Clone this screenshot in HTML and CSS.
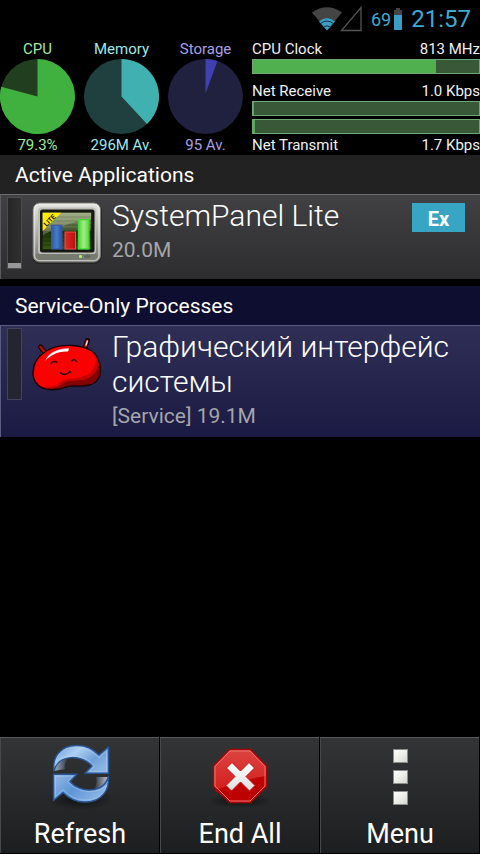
FILE: index.html
```html
<!DOCTYPE html>
<html lang="en">
<head>
<meta charset="utf-8">
<meta name="viewport" content="width=device-width, initial-scale=1">
<title>SystemPanel</title>
<link rel="stylesheet" href="styles.css">
</head>
<body>
<div class="screen">
  <header class="status-bar">
    <svg class="signals" width="50" height="26" viewBox="0 0 50 26" aria-hidden="true">
      <path d="M0 6.500Q15-4 30 6.500L15 24.500Z" fill="#444"/>
      <path d="M7 15.500Q15 8.500 23 15.500L15 24.500Z" fill="#3b9cc4"/>
      <path d="M8.500 17.500Q15 12.500 21.500 17.500M11.500 21Q15 18.500 18.500 21" fill="none" stroke="#10303d" stroke-width="1"/>
      <path d="M29.500 24.500H49V1.500Z" fill="none" stroke="#555" stroke-width="1.300"/>
    </svg>
    <span class="battery-level">69</span>
    <svg class="battery" width="8" height="24" viewBox="0 0 8 24" aria-hidden="true">
      <path d="M2 1H6V3H8V23H0V3H2Z" fill="#444"/>
      <path d="M0 8H8V23H0Z" fill="#3b9cc4"/>
    </svg>
    <time class="clock">21:57</time>
  </header>

  <section class="stats">
    <div class="gauge gauge-cpu">
      <span>CPU</span>
      <svg class="pie" viewBox="-75 -75 150 150" aria-hidden="true">
        <circle r="75" fill="#213f1f"/>
        <path d="M0 0V-75A75 75 0 1 1 -72.500 -19.500Z" fill="#40b03f"/>
      </svg>
      <span>79.3%</span>
    </div>
    <div class="gauge gauge-memory">
      <span>Memory</span>
      <svg class="pie" viewBox="-75 -75 150 150" aria-hidden="true">
        <circle r="75" fill="#203f3f"/>
        <path d="M0 0V-75A75 75 0 0 1 51 55Z" fill="#40b0b0"/>
      </svg>
      <span>296M Av.</span>
    </div>
    <div class="gauge gauge-storage">
      <span>Storage</span>
      <svg class="pie" viewBox="-75 -75 150 150" aria-hidden="true">
        <circle r="75" fill="#20203f"/>
        <path d="M0 -6V-75A75 75 0 0 1 24 -71Z" fill="#4040b0"/>
      </svg>
      <span>95 Av.</span>
    </div>
    <div class="rates">
      <div class="rate"><span>CPU Clock</span><span>813 MHz</span></div>
      <div class="bar"><div class="bar-fill" style="width:81%"></div></div>
      <div class="rate rate-spaced"><span>Net Receive</span><span>1.0 Kbps</span></div>
      <div class="bar"><div class="bar-fill" style="width:0.5%"></div></div>
      <div class="bar bar-second"><div class="bar-fill" style="width:1%"></div></div>
      <div class="rate rate-below"><span>Net Transmit</span><span>1.7 Kbps</span></div>
    </div>
  </section>

  <main class="processes">
    <section class="group">
      <h2 class="group-title">Active Applications</h2>
      <article class="process">
        <div class="meter"><div class="meter-fill" style="height:5px"></div></div>
        <svg class="icon" viewBox="0 0 72 72" aria-hidden="true">
          <defs>
            <linearGradient id="frame" x2="0" y2="1"><stop stop-color="#e4e4e0"/><stop offset=".6" stop-color="#a5a5a0"/><stop offset="1" stop-color="#73736e"/></linearGradient>
            <linearGradient id="glass" x2="0" y2="1"><stop stop-color="#8c9a72"/><stop offset=".48" stop-color="#526038"/><stop offset=".5" stop-color="#1d3208"/><stop offset="1" stop-color="#345711"/></linearGradient>
            <linearGradient id="blue"><stop stop-color="#3158a8"/><stop offset=".5" stop-color="#477dc6"/><stop offset="1" stop-color="#2a4ea0"/></linearGradient>
            <linearGradient id="red"><stop stop-color="#d92b2b"/><stop offset="1" stop-color="#c00d12"/></linearGradient>
            <linearGradient id="green"><stop stop-color="#50d43c"/><stop offset=".5" stop-color="#a6ec84"/><stop offset="1" stop-color="#5fd04a"/></linearGradient>
          </defs>
          <rect x="1" y="6" width="70" height="61" rx="8" fill="#1c1c1c" opacity=".6"/>
          <rect x="2" y="6" width="67.500" height="59" rx="6.500" fill="url(#frame)" stroke="#777772"/>
          <rect x="3.500" y="7.500" width="64.500" height="56" rx="5" fill="none" stroke="#f2f2ee" stroke-width="1.500" opacity=".6"/>
          <rect x="7" y="10.500" width="58" height="47" rx="4" fill="#bebeb9"/>
          <path d="M5 57H66V59Q66 63 62 63H9Q5 63 5 59Z" fill="#777a71"/>
          <rect x="9" y="12.500" width="54.500" height="43" rx="2.500" fill="#171a12"/>
          <rect x="11.700" y="15.700" width="48.500" height="36.500" fill="url(#glass)"/>
          <path d="M12 20H60M12 24H60M12 28H60M12 32H60M12 36H60M12 40H60M12 44H60M12 48H60" stroke="#111d08" stroke-width=".8" opacity=".4"/>
          <path d="M11.700 15.700H60V22Q40 24 12 38Z" fill="#d4dcbb" opacity=".3"/>
          <rect x="20.500" y="28.300" width="10.500" height="23.700" fill="url(#blue)" stroke="#3158b5"/>
          <rect x="34" y="35" width="10.500" height="17" fill="url(#red)" stroke="#f34b4b"/>
          <rect x="47.500" y="22.700" width="10.500" height="29.300" fill="url(#green)" stroke="#3bdc31" stroke-width="1.300"/>
          <path d="M11.700 15.700H30.300L11.700 34Z" fill="#ffec00"/>
          <text x="15.500" y="30" transform="rotate(-45 15.500 30)" class="ribbon">LITE</text>
          <rect x="48" y="58" width="3" height="3" rx="1" fill="#a4ef5b"/>
          <ellipse cx="56.500" cy="59.500" rx="4" ry="2.500" fill="#65685f" stroke="#8c8f86" stroke-width=".7"/>
        </svg>
        <div class="details">
          <h3 class="name">SystemPanel Lite</h3>
          <p class="memory">20.0M</p>
        </div>
        <button class="badge" type="button">Ex</button>
      </article>
    </section>

    <section class="group group-service">
      <h2 class="group-title">Service-Only Processes</h2>
      <article class="process">
        <div class="meter"></div>
        <svg class="icon" viewBox="0 0 72 72" aria-hidden="true">
          <defs>
            <clipPath id="bean"><path d="M2 46C2 36 6 29 14 24C22 18 32 17 41 17.500C53 18.500 62 21 66 29C70 36 71 46 67 51C62 59 52 58 42 58C35 58 34 61 24 61.500C10 63 3 56 2 46Z"/></clipPath>
          </defs>
          <path d="M9.500 19L15 26M56.500 12.500L53 23" stroke="#140003" stroke-width="5" stroke-linecap="round"/>
          <path d="M9.500 19L15 26M56 13L53 23" stroke="#b80b0b" stroke-width="2.500" stroke-linecap="round"/>
          <path d="M55 17L56.500 13" stroke="#ffd9d9" stroke-width="1.500" stroke-linecap="round"/>
          <g clip-path="url(#bean)">
            <path d="M0 10H72V66H0Z" fill="#fb0000"/>
            <path d="M66 27C65 37 61 46 53 48C43 51 33 50 28 55C22 60 14 59 9 58L20 66H72V29Z" fill="#c80000"/>
            <path d="M68 33C68 43 61 50 52 52C43 53 36 52 31 56C27 60 20 61 16 60L24 66H72V36Z" fill="#850000"/>
            <path d="M14 33C17 25 27 20 38 20L38 23C27 22 21 27 14 33Z" fill="#ff9c9c"/>
            <path d="M15 31C20 24 28 20.500 37 21L37 23.500C28 23 22 26 15 31Z" fill="#fff"/>
          </g>
          <path d="M2 46C2 36 6 29 14 24C22 18 32 17 41 17.500C53 18.500 62 21 66 29C70 36 71 46 67 51C62 59 52 58 42 58C35 58 34 61 24 61.500C10 63 3 56 2 46Z" fill="none" stroke="#180005" stroke-width="1.400"/>
          <path d="M19.500 36Q22 32 26.500 34.500M40.500 33.500Q43 29.500 46 34M29 44.500Q34 49 39 43.500M38 42.500L40 44.500" fill="none" stroke="#250000" stroke-width="1.300"/>
        </svg>
        <div class="details">
          <h3 class="name" lang="ru">Графический интерфейс системы</h3>
          <p class="memory">[Service] 19.1M</p>
        </div>
      </article>
    </section>
  </main>

  <nav class="actions">
    <button class="action" type="button">
      <svg class="icon" viewBox="0 0 72 72" aria-hidden="true">
        <defs>
          <linearGradient id="arrow" x2="1" y2=".6"><stop stop-color="#5d93d0"/><stop offset=".4" stop-color="#afd0f2"/><stop offset=".75" stop-color="#6fa0d8"/><stop offset="1" stop-color="#8ab4e4"/></linearGradient>
          <linearGradient id="arrow2" x2="1" y2=".5"><stop stop-color="#94bae8"/><stop offset=".5" stop-color="#5f95d5"/><stop offset="1" stop-color="#8bb5e6"/></linearGradient>
          <linearGradient id="fold" x2="1" y2="0"><stop stop-color="#9fb0c8"/><stop offset="1" stop-color="#20242b"/></linearGradient>
          <linearGradient id="fold2" x2="1" y2="0"><stop stop-color="#20242b"/><stop offset="1" stop-color="#b9c6d8"/></linearGradient>
          <radialGradient id="shade"><stop stop-color="#000" stop-opacity=".6"/><stop offset="1" stop-color="#000" stop-opacity="0"/></radialGradient>
        </defs>
        <ellipse cx="36" cy="59" rx="34" ry="11" fill="url(#shade)"/>
        <path d="M10 31C9 20 16 15 26 17C21 21 20 25 21 29Z" fill="url(#fold)"/>
        <path d="M64 37C64 47 58 51 49 50C53 46 53 41 52 37Z" fill="url(#fold2)"/>
        <path d="M10 31C8 17 17 5.500 32 5.500C42 5 49 9 55 15L64.500 7V33.300H41L48 26C38 14 14 14 10 31Z" fill="url(#arrow)" stroke="#2a5594" stroke-width="1.400" stroke-linejoin="round"/>
        <path d="M11.500 22C14 11 23 7.500 32 7.500C41 7 48 11 55 18L62.500 11V31.300H45.500L50.500 26C42 15 22 12 11.500 22Z" fill="none" stroke="#bdd8f5" stroke-width=".9" opacity=".5"/>
        <path d="M64.300 36.500C66 50 57 62 42 62C32 62.500 25 58.500 19 52.500L9.500 60.500V34.200H33L26 41.500C36 53.500 60 53.500 64.300 36.500Z" fill="url(#arrow2)" stroke="#2a5594" stroke-width="1.400" stroke-linejoin="round"/>
        <path d="M62.500 45.500C60 56.500 51 60 42 60C33 60.500 26 56.500 19 49.500L11.500 56.500V36.200H28.500L23.500 41.500C32 52.500 52 55.500 62.500 45.500Z" fill="none" stroke="#b5d3f4" stroke-width=".9" opacity=".5"/>
      </svg>
      <span>Refresh</span>
    </button>
    <button class="action" type="button">
      <svg class="icon" viewBox="0 0 72 72" aria-hidden="true">
        <defs>
          <linearGradient id="stop" x2="0" y2="1"><stop stop-color="#dc4440"/><stop offset="1" stop-color="#cf1414"/></linearGradient>
          <linearGradient id="cross" x2="0" y2="1"><stop stop-color="#fff"/><stop offset="1" stop-color="#dedede"/></linearGradient>
        </defs>
        <ellipse cx="36" cy="61" rx="32" ry="7" fill="url(#shade)"/>
        <path d="M25.500 9.500H46.500L62.500 26V46.500L46.500 62.500H25.500L9.500 46.500V26Z" fill="url(#stop)" stroke="#a30808" stroke-width="1.500"/>
        <path d="M10.500 50Q25 46 36 42T62 36V46L46 62H26Z" fill="#bd0000"/>
        <path d="M26 11H46L61 26.500V46L46 61H26L11 46V26.500Z" fill="none" stroke="#ee7771" stroke-width="1"/>
        <path d="M28 22.500L36.500 31L45 22.500L50.500 28L42 36.500L51 45.500L45.500 51L36.500 42L27.500 51L22 45.500L31 36.500L22.500 28Z" fill="url(#cross)" stroke="#c90c0c" stroke-width="1"/>
      </svg>
      <span>End All</span>
    </button>
    <button class="action" type="button">
      <svg class="icon" viewBox="0 0 72 72" aria-hidden="true">
        <defs>
          <linearGradient id="dot" x2="1" y2="1"><stop stop-color="#fff"/><stop offset=".5" stop-color="#eeeeea"/><stop offset="1" stop-color="#d3d5cf"/></linearGradient>
        </defs>
        <g fill="url(#dot)" stroke="#8b8d88">
          <rect x="29.500" y="9.500" width="14" height="13"/>
          <rect x="29.500" y="30.500" width="14" height="13"/>
          <rect x="29.500" y="51.500" width="14" height="13"/>
        </g>
      </svg>
      <span>Menu</span>
    </button>
  </nav>
</div>
</body>
</html>
```
FILE: styles.css
```css
* {
  box-sizing: border-box;
}

body {
  margin: 0;
  background: #000;
  color: #fff;
  font-family: Roboto, "Noto Sans", sans-serif;
}

h2,
h3,
p {
  margin: 0;
  font-weight: 400;
}

button {
  margin: 0;
  border: 0;
  color: #fff;
  font-family: inherit;
}

.screen {
  display: flex;
  flex-direction: column;
  min-height: 100vh;
}

.status-bar {
  display: flex;
  align-items: center;
  justify-content: flex-end;
  height: 38px;
  padding-right: 9px;
  color: #3fa9d4;
}

.battery-level {
  margin: 0 3px 0 9px;
  font-size: 18px;
}

.clock {
  margin-left: 9px;
  font-size: 24px;
}

.stats {
  display: grid;
  grid-template-columns: 75px 75px 75px 1fr;
  column-gap: 9px;
  height: 117px;
  padding-top: 1px;
  font-size: 15px;
  line-height: 20px;
}

.gauge {
  display: flex;
  flex-direction: column;
  align-items: center;
  white-space: nowrap;
}

.gauge-cpu {
  color: #a0e89c;
}

.gauge-memory {
  color: #a0e8e8;
}

.gauge-storage {
  color: #a8a0e8;
}

.pie {
  display: block;
  width: 75px;
  height: 75px;
  margin-bottom: 1px;
}

.rate {
  display: flex;
  justify-content: space-between;
  color: #f0f0f0;
}

.rate-spaced {
  margin-top: 7px;
}

.rate-below {
  margin-top: 1px;
}

.bar {
  height: 15px;
  border: 1px solid #6fa873;
  background: #385838;
}

.bar-second {
  margin-top: 3px;
}

.bar-fill {
  height: 100%;
  background: #50b050;
}

.processes {
  display: flex;
  flex: 1;
  flex-direction: column;
  gap: 7px;
}

.group-title {
  padding: 2px 15px 0;
  background: #222;
  font-size: 21px;
  line-height: 37px;
}

.process {
  display: flex;
  align-items: flex-start;
  min-height: 85px;
  padding: 2px 15px 3px 6px;
  border-top: 1px solid #6c6c6e;
  border-left: 1px solid #5c5c5e;
  background: linear-gradient(#414143, #2d2d2f);
}

.group-service .group-title {
  background: #0e0e30;
}

.group-service .process {
  border-color: #5c5c80;
  background: linear-gradient(#2f2f56, #1a1a44);
}

.meter {
  display: flex;
  flex: none;
  align-items: flex-end;
  width: 15px;
  height: 72px;
  border: 1px solid #4c4c4e;
  background: linear-gradient(90deg, #262626, #303030);
}

.group-service .meter {
  border-color: #42425c;
  background: #252532;
}

.meter-fill {
  width: 100%;
  background: #979797;
}

.icon {
  display: block;
  flex: none;
  width: 72px;
  height: 72px;
}

.process .icon {
  margin: 0 9px;
}

.ribbon {
  font: 700 7px Roboto, sans-serif;
  fill: #201c00;
}

.details {
  flex: 1;
  min-width: 0;
  padding-top: 1px;
}

.name {
  font-size: 30px;
  font-weight: 300;
  line-height: 35px;
}

.memory {
  color: #a5a5aa;
  font-size: 21px;
  line-height: 35px;
}

.badge {
  width: 53px;
  height: 29px;
  margin-top: 6px;
  padding: 2px 0 0;
  background: #38a5c4;
  font-size: 20px;
  font-weight: 700;
}

.actions {
  display: grid;
  grid-template-columns: repeat(3, 1fr);
  gap: 1px;
  padding: 0 1px 1px 0;
}

.action {
  display: flex;
  flex-direction: column;
  align-items: center;
  gap: 3px;
  padding: 2px 0 0;
  border-top: 1px solid #58595b;
  border-left: 1px solid #48494b;
  background: linear-gradient(#333436, #1d1e20);
  font-size: 27px;
  line-height: 38px;
}
```
